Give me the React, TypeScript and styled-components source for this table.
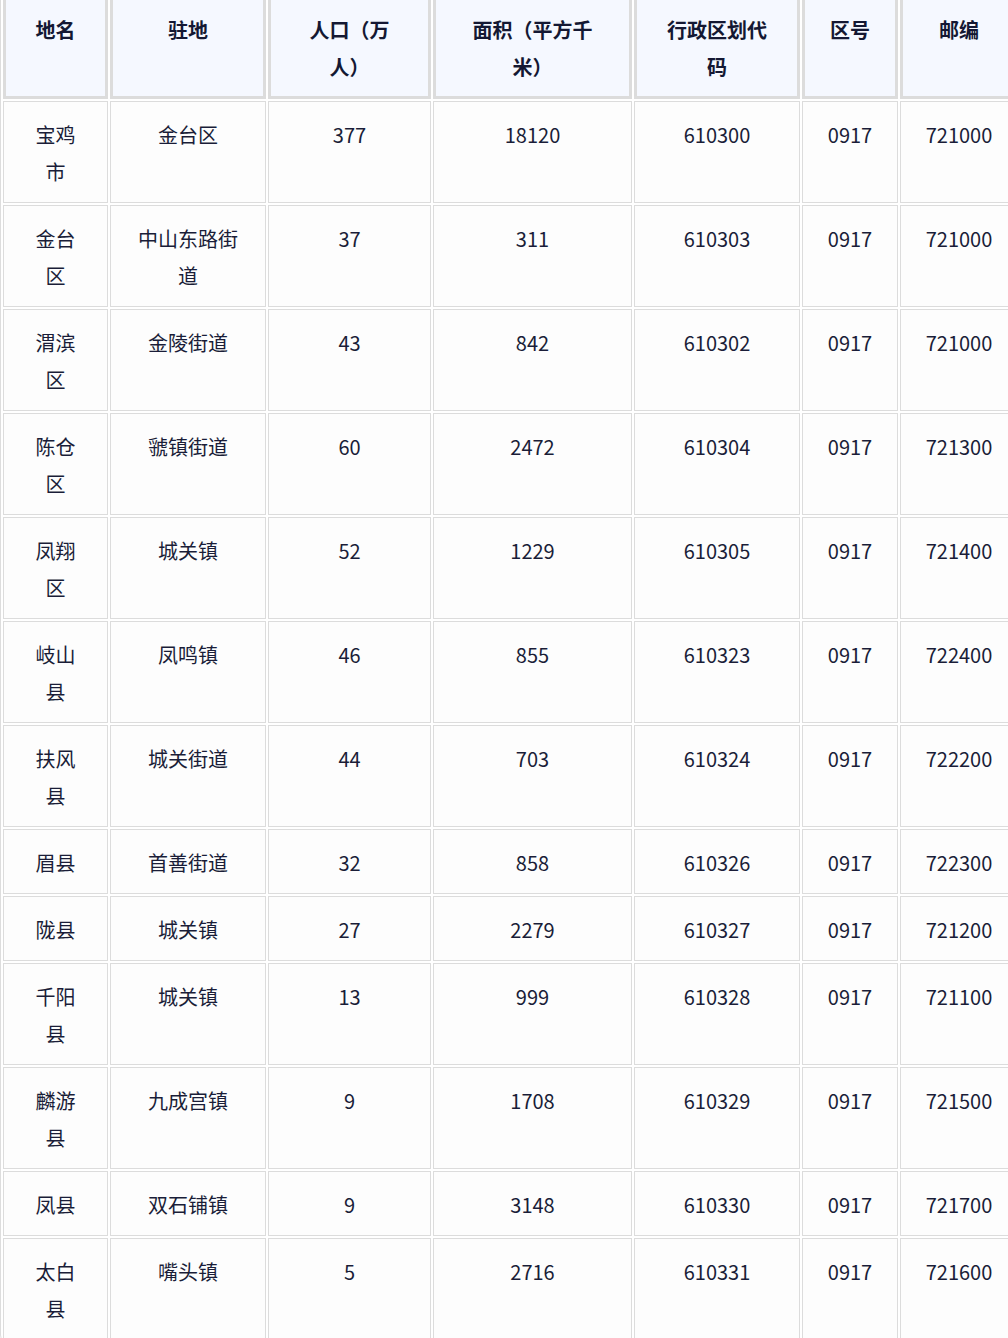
import React from "react";
import styled, { createGlobalStyle } from "styled-components";

const GlobalStyle = createGlobalStyle`
  html, body {
    margin: 0;
    padding: 0;
    background: #ffffff;
    overflow: hidden;
  }
  body {
    font-family: "Noto Sans CJK SC", "Noto Sans", sans-serif;
    color: #161a33;
  }
`;

const Page = styled.div`
  width: 1008px;
  overflow: hidden;
`;

const Frame = styled.div`
  width: max-content;
  margin-top: -8px;
  border: 1px solid #dddddd;
  border-radius: 8px;
  overflow: hidden;
  background: #ffffff;
`;

const Table = styled.table`
  table-layout: fixed;
  width: 1019px;
  border-collapse: separate;
  border-spacing: 2px;
  font-size: 20px;
  line-height: 37px;
`;

const Col = styled.col<{ $w: number }>`
  width: ${(p) => p.$w}px;
`;

const HeadCell = styled.th`
  box-sizing: border-box;
  background: #f5f8ff;
  border: 3px solid #dcdcdc;
  padding: 13px 24px 11px;
  font-weight: 600;
  text-align: center;
  vertical-align: top;
  color: #141833;
`;

const Cell = styled.td`
  box-sizing: border-box;
  background: #fdfdfd;
  border: 1px solid #dcdcdc;
  padding: 14px 24px 12px;
  text-align: center;
  vertical-align: top;
  color: #1a1d38;
`;

const widths = [105, 156, 163, 199, 166, 96, 118];
const headers = ["地名", "驻地", "人口（万人）", "面积（平方千米）", "行政区划代码", "区号", "邮编"];

const rows: string[][] = [
  ["宝鸡市", "金台区", "377", "18120", "610300", "0917", "721000"],
  ["金台区", "中山东路街道", "37", "311", "610303", "0917", "721000"],
  ["渭滨区", "金陵街道", "43", "842", "610302", "0917", "721000"],
  ["陈仓区", "虢镇街道", "60", "2472", "610304", "0917", "721300"],
  ["凤翔区", "城关镇", "52", "1229", "610305", "0917", "721400"],
  ["岐山县", "凤鸣镇", "46", "855", "610323", "0917", "722400"],
  ["扶风县", "城关街道", "44", "703", "610324", "0917", "722200"],
  ["眉县", "首善街道", "32", "858", "610326", "0917", "722300"],
  ["陇县", "城关镇", "27", "2279", "610327", "0917", "721200"],
  ["千阳县", "城关镇", "13", "999", "610328", "0917", "721100"],
  ["麟游县", "九成宫镇", "9", "1708", "610329", "0917", "721500"],
  ["凤县", "双石铺镇", "9", "3148", "610330", "0917", "721700"],
  ["太白县", "嘴头镇", "5", "2716", "610331", "0917", "721600"],
];

export default function App() {
  return (
    <Page>
      <GlobalStyle />
      <Frame>
        <Table>
          <colgroup>
            {widths.map((w, i) => (
              <Col key={i} $w={w} />
            ))}
          </colgroup>
          <thead>
            <tr>
              {headers.map((h) => (
                <HeadCell key={h}>{h}</HeadCell>
              ))}
            </tr>
          </thead>
          <tbody>
            {rows.map((r, i) => (
              <tr key={i}>
                {r.map((c, j) => (
                  <Cell key={j}>{c}</Cell>
                ))}
              </tr>
            ))}
          </tbody>
        </Table>
      </Frame>
    </Page>
  );
}
